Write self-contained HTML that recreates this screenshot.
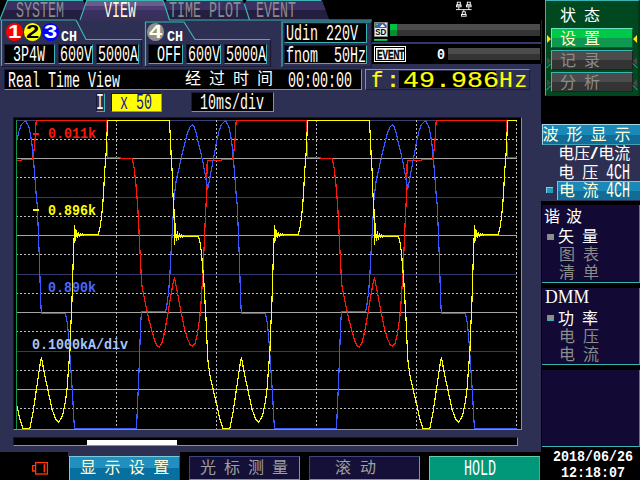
<!DOCTYPE html>
<html><head><meta charset="utf-8"><title>Real Time View</title>
<style>
html,body{margin:0;padding:0;background:#000;}
#s{position:relative;width:640px;height:480px;overflow:hidden;background:#000;font-family:"Liberation Mono","Noto Sans CJK SC",monospace;}
#s>div,#s>span,#s>svg{position:absolute;box-sizing:border-box;}
.m{font-family:"Liberation Mono",monospace;font-size:20px;line-height:20px;white-space:pre;transform:scale(.667,1.07);transform-origin:0 0;color:#fff;}
.b{font-family:"Liberation Mono",monospace;font-weight:bold;font-size:14px;line-height:15px;white-space:pre;transform:scaleX(.952);transform-origin:0 0;color:#fff;}
.c{font-family:"Liberation Sans","Noto Sans CJK SC",sans-serif;font-size:16px;line-height:16px;white-space:pre;color:#fff;}
.bk{background:#000;border-right:1px solid #3cb4b4;border-bottom:1px solid #3cb4b4;border-left:1px solid #181a34;border-top:1px solid #181a34;}
.hl{left:16px;width:501px;height:1px;}
.dh{background:repeating-linear-gradient(90deg,#c0c0c0 0,#c0c0c0 2px,transparent 2px,transparent 4px);}
.vl{top:120px;height:309px;width:1px;background:repeating-linear-gradient(180deg,#c0c0c0 0,#c0c0c0 2px,transparent 2px,transparent 4px);}
</style></head><body><div id="s">

<div style="left:0;top:20px;width:541px;height:432px;background:#2d3052"></div>
<div style="left:372px;top:0;width:169px;height:64px;background:#000"></div>
<div style="left:372px;top:42px;width:169px;height:2px;background:#34386c"></div>
<div style="left:541px;top:20px;width:1px;height:44px;background:#083030"></div>
<svg style="left:0;top:0" width="372" height="21" viewBox="0 0 372 21">
<defs>
<linearGradient id="gi" x1="0" y1="0" x2="0" y2="1"><stop offset="0" stop-color="#3a3062"/><stop offset=".5" stop-color="#3a3062"/><stop offset=".5" stop-color="#241f40"/><stop offset="1" stop-color="#241f40"/></linearGradient>
<linearGradient id="ga" x1="0" y1="0" x2="0" y2="1"><stop offset="0" stop-color="#6c5c8c"/><stop offset=".27" stop-color="#6c5c8c"/><stop offset=".27" stop-color="#4c3c70"/><stop offset=".5" stop-color="#4c3c70"/><stop offset=".5" stop-color="#3a3062"/><stop offset="1" stop-color="#363058"/></linearGradient>
</defs>
<polygon points="7.5,0 83,0 85,4 80,20.5 0,20.5" fill="url(#gi)"/>
<polygon points="86.5,0 163,0 169.5,20.5 80,20.5" fill="url(#ga)"/>
<polygon points="166.5,0 242.5,0 244.3,4 249.5,20.5 169.5,20.5 164.3,4" fill="url(#gi)"/>
<polygon points="246.5,0 322,0 329.5,20.5 249.5,20.5 244.3,4" fill="url(#gi)"/>
<g stroke="#3cb4b4" stroke-width="1.2" fill="none">
<polyline points="0,19.5 7.5,0.5 83,0.5"/>
<polyline points="80,20 86.8,0.5 163,0.5"/>
<polyline points="166.5,0.5 242.5,0.5"/><polyline points="246.5,0.5 321,0.5"/>
<line x1="163.2" y1="0.5" x2="169.5" y2="20"/><line x1="244.3" y1="3.5" x2="249.5" y2="20"/>
<line x1="0" y1="20" x2="76" y2="20"/>
<line x1="169" y1="20" x2="372" y2="20"/>
</g>
</svg>
<span class="m" style="left:16px;top:0.8px;color:#8c8c8c">SYSTEM</span>
<span class="m" style="left:104px;top:0.8px;color:#fffadc">VIEW</span>
<span class="m" style="left:169px;top:0.8px;color:#8c8c8c">TIME PLOT</span>
<span class="m" style="left:256px;top:0.8px;color:#8c8c8c">EVENT</span>
<svg style="left:0;top:19px" width="372" height="50" viewBox="0 19 372 50">
<g stroke="#3cb4b4" stroke-width="1.2" fill="none">
<polyline points="1.5,66 1.5,20.5"/>
<polyline points="76,20 86,39.5 142,39.5"/>
<polyline points="145.5,66 145.5,22 184,22 195,39.5 270,39.5"/>
<polyline points="282,67 282,22 371,22"/>
</g>
<g stroke="#181a34" stroke-width="1.2" fill="none">
<polyline points="1,66.5 141.5,66.5 141.5,40"/>
<polyline points="145,66.5 270.5,66.5 270.5,40"/>
<polyline points="282,67 371.5,67 371.5,22"/>
</g>
</svg>
<div style="left:6.0px;top:23.3px;width:17px;height:17.4px;border-radius:50%;background:#ff0000"></div>
<span style="left:6.0px;top:22.6px;width:17px;text-align:center;font:bold 18px/19px 'Liberation Sans',sans-serif;color:#fff;transform:scaleX(1.32)">1</span>
<div style="left:24.0px;top:23.3px;width:17px;height:17.4px;border-radius:50%;background:#ffff00"></div>
<span style="left:24.0px;top:22.6px;width:17px;text-align:center;font:bold 18px/19px 'Liberation Sans',sans-serif;color:#000;transform:scaleX(1.32)">2</span>
<div style="left:42.0px;top:23.3px;width:17px;height:17.4px;border-radius:50%;background:#0000ff"></div>
<span style="left:42.0px;top:22.6px;width:17px;text-align:center;font:bold 18px/19px 'Liberation Sans',sans-serif;color:#fff;transform:scaleX(1.32)">3</span>
<div style="left:147.0px;top:23.3px;width:17px;height:17.4px;border-radius:50%;background:#909090"></div>
<span style="left:147.0px;top:22.6px;width:17px;text-align:center;font:bold 18px/19px 'Liberation Sans',sans-serif;color:#ffffe0;transform:scaleX(1.32)">4</span>
<span class="b" style="left:60.5px;top:30px;">CH</span>
<span class="b" style="left:166.5px;top:30px;">CH</span>
<div class="bk" style="left:4px;top:44px;width:51px;height:20px"></div>
<span class="m" style="left:12.6px;top:45px;color:#fff">3P4W</span>
<div class="bk" style="left:58px;top:44px;width:35px;height:20px"></div>
<span class="m" style="left:60px;top:45px;color:#fff">600V</span>
<div class="bk" style="left:96px;top:44px;width:43px;height:20px"></div>
<span class="m" style="left:98px;top:45px;color:#fff">5000A</span>
<div class="bk" style="left:148px;top:44px;width:35px;height:20px"></div>
<span class="m" style="left:157px;top:45px;color:#fff">OFF</span>
<div class="bk" style="left:186px;top:44px;width:35px;height:20px"></div>
<span class="m" style="left:188px;top:45px;color:#fff">600V</span>
<div class="bk" style="left:224px;top:44px;width:43px;height:20px"></div>
<span class="m" style="left:226px;top:45px;color:#fff">5000A</span>
<div class="bk" style="left:284px;top:23px;width:83px;height:19.5px"></div>
<span class="m" style="left:286px;top:24px;color:#fff">Udin 220V</span>
<div class="bk" style="left:284px;top:44.5px;width:83px;height:19.5px"></div>
<span class="m" style="left:286px;top:45.5px;color:#fff">fnom  50Hz</span>
<div class="bk" style="left:4px;top:69px;width:358px;height:21px"></div>
<span class="m" style="left:8px;top:70.8px">Real Time View</span>
<span class="c" style="left:185px;top:71px;letter-spacing:8px">经过时间</span>
<span class="m" style="left:287.5px;top:70.8px">00:00:00</span>
<div style="left:365px;top:69px;width:165px;height:21px;border-left:1px solid #3cb4b4;border-top:1px solid #3cb4b4;border-bottom:1px solid #10282c;border-right:1px solid #10282c;background:#2d3052"></div>
<div style="left:399px;top:71px;width:97px;height:17px;background:#000"></div>
<span style="left:370.5px;top:69px;font:21px/24px 'Liberation Mono',monospace;color:#ffff00;white-space:pre;-webkit-text-stroke:.15px #ffff00;transform-origin:0 0;transform:scale(.98,1.05)">f</span>
<span style="left:385px;top:69px;font:21px/24px 'Liberation Mono',monospace;color:#ffff00;white-space:pre;-webkit-text-stroke:.15px #ffff00;transform-origin:0 0;transform:scale(1.27,1.05)">:</span>
<span style="left:403px;top:69px;font:21px/24px 'Liberation Mono',monospace;color:#ffff00;white-space:pre;-webkit-text-stroke:.15px #ffff00;transform-origin:0 0;transform:scale(1.27,1.05)">49.986</span>
<span style="left:499.3px;top:69px;font:21px/24px 'Liberation Mono',monospace;color:#ffff00;white-space:pre;-webkit-text-stroke:.15px #ffff00;transform-origin:0 0;transform:scale(1.1,1.05)">H</span>
<span style="left:514.6px;top:69px;font:21px/24px 'Liberation Mono',monospace;color:#ffff00;white-space:pre;-webkit-text-stroke:.15px #ffff00;transform-origin:0 0;transform:scale(1.0,1.05)">z</span>
<svg style="left:374px;top:22px" width="14" height="20" viewBox="0 0 14 20">
<rect x="0" y="0" width="13.5" height="15" fill="#f4f4f4"/>
<path d="M0.8,0.8 H10 L12.7,3.2 V6 H0.8 Z" fill="#4060a8"/>
<polygon points="6,5 8.5,2 11,5" fill="#fff"/><rect x="1.6" y="1.6" width="2.4" height="1.3" fill="#40e060"/>
<rect x="0.4" y="0.4" width="12.8" height="14.2" fill="none" stroke="#707070" stroke-width=".8"/>
<text x="1.2" y="13.3" font-family="Liberation Sans,sans-serif" font-weight="bold" font-size="8.5" fill="#000" textLength="11" lengthAdjust="spacingAndGlyphs">SD</text>
<rect x="0" y="17" width="13.5" height="1.8" fill="#00e050"/>
</svg>
<div style="left:390px;top:24px;width:150px;height:12px;background:linear-gradient(#4c4c4c 0,#4c4c4c 50%,#343434 50%,#343434 100%)"></div>
<div style="left:390px;top:24px;width:7px;height:12px;background:linear-gradient(#00c040 0,#00c040 50%,#009030 50%,#009030 100%)"></div>
<div style="left:374px;top:46px;width:32px;height:16px;background:#fff;border:1px solid #fff;outline:0"></div>
<div style="left:375px;top:47px;width:30px;height:14px;border:1px solid #000"></div>
<span style="left:377px;top:46.5px;font:bold 13px/15px 'Liberation Sans',sans-serif;color:#000;-webkit-text-stroke:.5px #000;transform:scaleX(.63);transform-origin:0 0;white-space:pre">EVENT</span>
<span class="b" style="left:436.5px;top:48px">0</span>
<div style="left:448px;top:48px;width:92px;height:12px;background:linear-gradient(#4c4c4c 0,#4c4c4c 50%,#343434 50%,#343434 100%)"></div>
<svg style="left:455px;top:1px" width="18" height="17" viewBox="0 0 18 17"><g fill="none" stroke="#fff" stroke-width=".9">
<rect x="2.3" y="1.2" width="3" height="2.8"/><rect x="1.5" y="4" width="4.6" height="1.8"/>
<rect x="12.3" y="1.2" width="3" height="2.8"/><rect x="11.5" y="4" width="4.6" height="1.8"/>
<path d="M3.8,5.8 V8.6 M13.8,5.8 V8.6 M1,8.6 H16.6 M8.8,8.6 V11"/>
<rect x="7.3" y="10.8" width="3" height="2.6"/><rect x="6.5" y="13.4" width="4.6" height="1.8"/>
</g></svg>
<div style="left:95.5px;top:92.5px;width:9.5px;height:19px;background:#2d3052;border-right:1px solid #3cb4b4;border-bottom:1px solid #3cb4b4;border-left:1px solid #181a34;border-top:1px solid #181a34"></div>
<span class="m" style="left:96px;top:92.5px">I</span>
<div style="left:111px;top:93px;width:51px;height:18.5px;background:#ffff00;border-right:1px solid #3cb4b4;border-bottom:1px solid #3cb4b4;border-left:1px solid #181a34;border-top:1px solid #181a34"></div>
<span class="m" style="left:119.5px;top:92.5px;color:#1818a0">x 50</span>
<div class="bk" style="left:190.5px;top:92px;width:83px;height:19.5px"></div>
<span class="m" style="left:200px;top:92.5px">10ms/div</span>
<div style="left:13px;top:117px;width:509px;height:313px;background:#000;border-right:1px solid #3cb4b4;border-bottom:1px solid #3cb4b4;border-left:1px solid #0c1c20;border-top:1px solid #0c1c20"></div>
<div class="hl" style="top:120px;background:#3c4070"></div>
<div class="hl dh" style="top:139px"></div>
<div class="hl" style="top:158px;background:#a4a4a4"></div>
<div class="hl dh" style="top:177px"></div>
<div class="hl" style="top:197px;background:#34386c"></div>
<div class="hl dh" style="top:216px"></div>
<div class="hl" style="top:235px;background:#a4a4a4"></div>
<div class="hl dh" style="top:254px"></div>
<div class="hl" style="top:274px;background:#34386c"></div>
<div class="hl dh" style="top:293px"></div>
<div class="hl" style="top:312px;background:#a4a4a4"></div>
<div class="hl dh" style="top:331px"></div>
<div class="hl" style="top:351px;background:#34386c"></div>
<div class="hl dh" style="top:370px"></div>
<div class="hl" style="top:389px;background:#a4a4a4"></div>
<div class="hl dh" style="top:408px"></div>
<div class="vl" style="left:116px"></div>
<div class="vl" style="left:216px"></div>
<div class="vl" style="left:316px"></div>
<div class="vl" style="left:416px"></div>
<div class="vl" style="left:516px"></div>
<div style="left:16px;top:120px;width:1px;height:309px;background:#109848"></div>
<svg style="left:0;top:0" width="640" height="480" viewBox="0 0 640 480"><defs><clipPath id="cp"><rect x="16.5" y="119.5" width="500.3" height="310"/></clipPath></defs><g clip-path="url(#cp)" fill="none" stroke-width="1.2" stroke-linejoin="round" shape-rendering="crispEdges">
<polyline stroke="#ff1808" points="17.0,160.5 21.0,160.5 21.5,159.5 32.5,159.5 33.4,155.0 34.8,143.0 36.2,120.5 106.5,120.5 107.2,157.5 120.0,157.5 120.5,158.5 132.2,158.5 134.0,167.5 135.6,180.6 136.9,195.6 137.8,208.0 138.4,218.8 139.3,237.5 140.2,256.2 141.2,275.0 142.1,287.0 143.4,293.8 146.2,307.0 149.0,320.0 151.9,331.2 154.7,340.6 157.5,346.2 159.4,347.2 162.2,342.5 165.0,329.4 167.8,314.4 170.2,299.4 172.5,286.2 174.4,277.8 176.2,286.2 179.0,301.2 181.9,316.2 184.7,329.4 187.5,338.8 190.3,344.8 192.8,346.2 195.0,343.4 197.2,335.0 199.7,318.0 201.0,303.0 202.1,286.2 202.9,275.0 203.4,262.0 204.4,241.0 205.3,218.8 206.3,200.0 206.8,180.0 207.2,160.5 217.0,160.5 217.0,160.5 221.0,160.5 221.5,159.5 232.5,159.5 233.4,155.0 234.8,143.0 236.2,120.5 306.5,120.5 307.2,157.5 320.0,157.5 320.5,158.5 332.2,158.5 334.0,167.5 335.6,180.6 336.9,195.6 337.8,208.0 338.4,218.8 339.3,237.5 340.2,256.2 341.2,275.0 342.1,287.0 343.4,293.8 346.2,307.0 349.0,320.0 351.9,331.2 354.7,340.6 357.5,346.2 359.4,347.2 362.2,342.5 365.0,329.4 367.8,314.4 370.2,299.4 372.5,286.2 374.4,277.8 376.2,286.2 379.0,301.2 381.9,316.2 384.7,329.4 387.5,338.8 390.3,344.8 392.8,346.2 395.0,343.4 397.2,335.0 399.7,318.0 401.0,303.0 402.1,286.2 402.9,275.0 403.4,262.0 404.4,241.0 405.3,218.8 406.3,200.0 406.8,180.0 407.2,160.5 417.0,160.5 417.0,160.5 421.0,160.5 421.5,159.5 432.5,159.5 433.4,155.0 434.8,143.0 436.2,120.5 506.5,120.5 507.2,157.5 520.0,157.5 520.5,158.5 532.2,158.5 534.0,167.5 535.6,180.6 536.9,195.6 537.8,208.0 538.4,218.8 539.3,237.5 540.2,256.2 541.2,275.0 542.1,287.0 543.4,293.8 546.2,307.0 549.0,320.0 551.9,331.2 554.7,340.6 557.5,346.2 559.4,347.2 562.2,342.5 565.0,329.4 567.8,314.4 570.2,299.4 572.5,286.2 574.4,277.8 576.2,286.2 579.0,301.2 581.9,316.2 584.7,329.4 587.5,338.8 590.3,344.8 592.8,346.2 595.0,343.4 597.2,335.0 599.7,318.0 601.0,303.0 602.1,286.2 602.9,275.0 603.4,262.0 604.4,241.0 605.3,218.8 606.3,200.0 606.8,180.0 607.2,160.5 617.0,160.5"/>
<polyline stroke="#3858ff" points="17.0,139.4 19.0,131.0 21.5,124.5 25.4,120.5 28.8,126.2 31.6,141.2 32.9,152.5 33.4,160.0 34.8,175.0 36.2,195.6 37.2,205.0 38.1,226.0 39.0,248.8 39.8,273.0 40.5,295.0 41.3,313.5 65.3,313.5 67.2,322.0 68.5,335.0 69.6,350.0 70.4,363.0 71.5,378.0 72.8,398.8 73.8,419.4 74.7,428.5 136.5,428.5 136.9,419.4 137.8,398.8 138.8,376.2 139.7,352.0 140.6,323.8 141.6,311.5 165.6,311.5 166.9,305.0 168.4,293.8 169.7,278.8 170.6,260.0 171.6,243.0 172.5,228.0 173.4,211.0 174.0,198.0 176.2,180.6 180.0,163.8 183.8,147.0 187.5,132.8 190.0,127.0 192.2,124.8 194.2,127.0 196.0,132.0 198.8,145.0 202.5,160.0 205.3,175.0 207.8,189.0 210.0,177.0 212.8,162.0 215.6,147.0 217.0,139.4 217.0,139.4 219.0,131.0 221.5,124.5 225.4,120.5 228.8,126.2 231.6,141.2 232.9,152.5 233.4,160.0 234.8,175.0 236.2,195.6 237.2,205.0 238.1,226.0 239.0,248.8 239.8,273.0 240.5,295.0 241.3,313.5 265.3,313.5 267.2,322.0 268.5,335.0 269.6,350.0 270.4,363.0 271.5,378.0 272.8,398.8 273.8,419.4 274.7,428.5 336.5,428.5 336.9,419.4 337.8,398.8 338.8,376.2 339.7,352.0 340.6,323.8 341.6,311.5 365.6,311.5 366.9,305.0 368.4,293.8 369.7,278.8 370.6,260.0 371.6,243.0 372.5,228.0 373.4,211.0 374.0,198.0 376.2,180.6 380.0,163.8 383.8,147.0 387.5,132.8 390.0,127.0 392.2,124.8 394.2,127.0 396.0,132.0 398.8,145.0 402.5,160.0 405.3,175.0 407.8,189.0 410.0,177.0 412.8,162.0 415.6,147.0 417.0,139.4 417.0,139.4 419.0,131.0 421.5,124.5 425.4,120.5 428.8,126.2 431.6,141.2 432.9,152.5 433.4,160.0 434.8,175.0 436.2,195.6 437.2,205.0 438.1,226.0 439.0,248.8 439.8,273.0 440.5,295.0 441.3,313.5 465.3,313.5 467.2,322.0 468.5,335.0 469.6,350.0 470.4,363.0 471.5,378.0 472.8,398.8 473.8,419.4 474.7,428.5 536.5,428.5 536.9,419.4 537.8,398.8 538.8,376.2 539.7,352.0 540.6,323.8 541.6,311.5 565.6,311.5 566.9,305.0 568.4,293.8 569.7,278.8 570.6,260.0 571.6,243.0 572.5,228.0 573.4,211.0 574.0,198.0 576.2,180.6 580.0,163.8 583.8,147.0 587.5,132.8 590.0,127.0 592.2,124.8 594.2,127.0 596.0,132.0 598.8,145.0 602.5,160.0 605.3,175.0 607.8,189.0 610.0,177.0 612.8,162.0 615.6,147.0 617.0,139.4"/>
<polyline stroke="#ffff00" points="17.1,406.0 19.5,418.0 23.1,428.5 29.7,428.5 32.5,415.6 35.3,397.0 38.1,378.0 40.0,365.0 41.5,357.5 43.8,370.6 46.6,383.8 49.4,397.0 52.2,410.0 55.9,419.4 58.8,422.2 62.5,415.6 65.3,402.5 67.2,387.5 68.5,368.8 70.0,350.0 70.9,324.0 71.9,303.0 72.6,280.0 73.4,255.0 74.2,236.0 74.7,226.0 75.6,240.0 76.6,231.0 77.6,237.7 78.6,232.4 79.6,236.5 80.6,233.4 81.6,235.7 82.6,234.0 83.6,235.2 85.0,234.5 98.0,234.5 100.0,228.0 101.5,217.0 102.8,204.0 103.8,188.0 104.7,171.0 106.0,155.0 107.0,134.0 107.9,120.5 169.1,120.5 170.2,133.8 171.0,152.5 172.1,171.2 173.0,195.6 174.0,210.0 174.5,244.0 175.3,224.0 176.3,240.5 177.3,232.0 178.3,239.0 179.3,233.6 180.3,237.8 181.3,234.8 182.3,237.0 183.3,235.4 184.3,236.5 186.0,236.5 198.4,236.5 200.2,243.0 201.6,254.4 202.5,265.6 203.8,280.6 204.4,292.0 205.9,316.2 206.8,336.9 207.8,359.4 208.5,365.0 210.4,378.0 212.8,387.5 215.6,400.6 217.1,406.0 217.1,406.0 219.5,418.0 223.1,428.5 229.7,428.5 232.5,415.6 235.3,397.0 238.1,378.0 240.0,365.0 241.5,357.5 243.8,370.6 246.6,383.8 249.4,397.0 252.2,410.0 255.9,419.4 258.8,422.2 262.5,415.6 265.3,402.5 267.2,387.5 268.5,368.8 270.0,350.0 270.9,324.0 271.9,303.0 272.6,280.0 273.4,255.0 274.2,236.0 274.7,226.0 275.6,240.0 276.6,231.0 277.6,237.7 278.6,232.4 279.6,236.5 280.6,233.4 281.6,235.7 282.6,234.0 283.6,235.2 285.0,234.5 298.0,234.5 300.0,228.0 301.5,217.0 302.8,204.0 303.8,188.0 304.7,171.0 306.0,155.0 307.0,134.0 307.9,120.5 369.1,120.5 370.2,133.8 371.0,152.5 372.1,171.2 373.0,195.6 374.0,210.0 374.5,244.0 375.3,224.0 376.3,240.5 377.3,232.0 378.3,239.0 379.3,233.6 380.3,237.8 381.3,234.8 382.3,237.0 383.3,235.4 384.3,236.5 386.0,236.5 398.4,236.5 400.2,243.0 401.6,254.4 402.5,265.6 403.8,280.6 404.4,292.0 405.9,316.2 406.8,336.9 407.8,359.4 408.5,365.0 410.4,378.0 412.8,387.5 415.6,400.6 417.1,406.0 417.1,406.0 419.5,418.0 423.1,428.5 429.7,428.5 432.5,415.6 435.3,397.0 438.1,378.0 440.0,365.0 441.5,357.5 443.8,370.6 446.6,383.8 449.4,397.0 452.2,410.0 455.9,419.4 458.8,422.2 462.5,415.6 465.3,402.5 467.2,387.5 468.5,368.8 470.0,350.0 470.9,324.0 471.9,303.0 472.6,280.0 473.4,255.0 474.2,236.0 474.7,226.0 475.6,240.0 476.6,231.0 477.6,237.7 478.6,232.4 479.6,236.5 480.6,233.4 481.6,235.7 482.6,234.0 483.6,235.2 485.0,234.5 498.0,234.5 500.0,228.0 501.5,217.0 502.8,204.0 503.8,188.0 504.7,171.0 506.0,155.0 507.0,134.0 507.9,120.5 569.1,120.5 570.2,133.8 571.0,152.5 572.1,171.2 573.0,195.6 574.0,210.0 574.5,244.0 575.3,224.0 576.3,240.5 577.3,232.0 578.3,239.0 579.3,233.6 580.3,237.8 581.3,234.8 582.3,237.0 583.3,235.4 584.3,236.5 586.0,236.5 598.4,236.5 600.2,243.0 601.6,254.4 602.5,265.6 603.8,280.6 604.4,292.0 605.9,316.2 606.8,336.9 607.8,359.4 608.5,365.0 610.4,378.0 612.8,387.5 615.6,400.6 617.1,406.0"/>
</g></svg>
<div style="left:33px;top:132.5px;width:6px;height:2px;background:#ff1808"></div>
<span class="b" style="left:48px;top:127.3px;color:#ff1808">0.011k</span>
<div style="left:33px;top:209px;width:6px;height:2px;background:#ffff00"></div>
<span class="b" style="left:48px;top:204.4px;color:#ffff00">0.896k</span>
<span class="b" style="left:48px;top:281.4px;color:#4868ff">0.890k</span>
<span class="b" style="left:32px;top:338.3px;color:#a8c4ff">0.1000kA/div</span>
<div style="left:13px;top:437px;width:505px;height:9px;background:#000;border-right:1px solid #3cb4b4;border-bottom:1px solid #3cb4b4;border-left:1px solid #0c1c20;border-top:1px solid #0c1c20"></div>
<div style="left:87px;top:440px;width:90px;height:5px;background:#fff"></div>
<div style="left:68px;top:452px;width:112px;height:5px;background:#2d3052"></div>
<svg style="left:31px;top:461px" width="18" height="15" viewBox="0 0 18 15"><g fill="none" stroke="#ff3c00" stroke-width="1.3">
<rect x="4.6" y="1.6" width="11.8" height="11.4"/><path d="M4.6,4.6 H1.7 V10 H4.6"/></g><rect x="12.6" y="3.2" width="1.7" height="8.2" fill="#ff3c00"/></svg>
<div style="left:69px;top:456px;width:111px;height:24px;background:linear-gradient(#2090c0 0,#2090c0 50%,#0870a0 50%,#0870a0 100%);border-left:1px solid #78cce0;border-top:1px solid #78cce0;border-right:1px solid #085878"></div>
<span class="c" style="left:80px;top:460px;letter-spacing:8.4px;color:#ffffdc">显示设置</span>
<div style="left:189px;top:456px;width:111px;height:24px;background:#141038;border-left:1px solid #40447c;border-top:1px solid #40447c;border-right:1px solid #3cb4b4;border-bottom:1px solid #3cb4b4"></div>
<div style="left:309px;top:456px;width:111px;height:24px;background:#141038;border-left:1px solid #40447c;border-top:1px solid #40447c;border-right:1px solid #3cb4b4;border-bottom:1px solid #3cb4b4"></div>
<span class="c" style="left:200px;top:460px;letter-spacing:8px;color:#a0a0a0">光标测量</span>
<span class="c" style="left:335px;top:460px;letter-spacing:9px;color:#a0a0a0">滚动</span>
<div style="left:429px;top:456px;width:111px;height:24px;background:#009878;border-left:1px solid #60d0b0;border-top:1px solid #60d0b0;border-right:1px solid #40b090"></div>
<span class="m" style="left:463.5px;top:458.8px">HOLD</span>
<span class="b" style="left:552.5px;top:450px">2018/06/26</span>
<span class="b" style="left:560.5px;top:466px">12:18:07</span>
<div style="left:545px;top:0;width:95px;height:96px;background:#004820;border-left:1px solid #3cb4b4;border-top:1px solid #3cb4b4;border-bottom:1px solid #004422;border-right:2px solid #003818"></div>
<span class="c" style="left:560px;top:8px;letter-spacing:8px">状态</span>
<div style="left:551px;top:28px;width:82px;height:20px;background:linear-gradient(#00c848 0,#00c848 50%,#109850 50%,#109850 100%);border-left:1px solid #70e0c0;border-top:1px solid #70e0c0;border-right:1px solid #086030;border-bottom:1px solid #086030"></div>
<span class="c" style="left:560px;top:30.5px;letter-spacing:8px;color:#ffffc8">设置</span>
<div style="left:551px;top:50px;width:82px;height:20px;background:linear-gradient(#4c4c4c 0,#4c4c4c 50%,#343434 50%,#343434 100%);border-left:1px solid #3cb4b4;border-top:1px solid #3cb4b4;border-right:1px solid #202020;border-bottom:1px solid #202020"></div>
<span class="c" style="left:560px;top:52.5px;letter-spacing:8px;color:#8c8c8c">记录</span>
<div style="left:551px;top:72px;width:82px;height:20px;background:linear-gradient(#4c4c4c 0,#4c4c4c 50%,#343434 50%,#343434 100%);border-left:1px solid #3cb4b4;border-top:1px solid #3cb4b4;border-right:1px solid #202020;border-bottom:1px solid #202020"></div>
<span class="c" style="left:560px;top:74.5px;letter-spacing:8px;color:#8c8c8c">分析</span>
<svg style="left:546px;top:28px" width="94" height="66" viewBox="0 0 94 66">
<polygon points="1,7 5,11 1,15" fill="#ffe800"/><polygon points="91,7 87,11 91,15" fill="#ffe800"/>
<polygon points="1,29 5,33 1,37" fill="#484848"/><polygon points="91,29 87,33 91,37" fill="#484848"/>
<polygon points="1,51 5,55 1,59" fill="#484848"/><polygon points="91,51 87,55 91,59" fill="#484848"/>
<g stroke="#3cb4b4" stroke-width="1" fill="none"><path d="M0.5,40 L5,35.5 M0.5,62 L5,57.5 M87,35.5 L91.5,40 M87,57.5 L91.5,62"/></g>
</svg>
<div style="left:541px;top:124px;width:99px;height:77px;background:#2d3052"></div>
<div style="left:542px;top:124px;width:98px;height:21px;background:linear-gradient(#1c88b8 0,#1c88b8 50%,#106c98 50%,#106c98 100%);border-left:1px solid #a0d8e8;border-top:1px solid #a0d8e8;border-bottom:1px solid #48a0b8"></div>
<span class="c" style="left:542.5px;top:126.5px;letter-spacing:8px;color:#ffffdc">波形显示</span>
<span class="c" style="left:558.3px;top:146px">电压<span style="display:inline-block;width:8px;text-align:center;transform:scaleX(1.7)">/</span>电流</span>
<span class="c" style="left:558.3px;top:164.5px;letter-spacing:8px">电压</span>
<span class="m" style="left:606px;top:162.5px">4CH</span>
<div style="left:557px;top:181px;width:83px;height:19px;background:linear-gradient(#1c88b8 0,#1c88b8 50%,#106c98 50%,#106c98 100%);border-left:1px solid #78c4e0;border-top:1px solid #78c4e0"></div>
<span class="c" style="left:559px;top:182.5px;letter-spacing:7.5px;color:#ffffdc">电流</span>
<span class="m" style="left:606px;top:180.5px;color:#ffffdc">4CH</span>
<div style="left:546px;top:187px;width:7px;height:6px;background:#2898b8;border-left:1px solid #80d0e0;border-top:1px solid #80d0e0"></div>
<div style="left:542px;top:205px;width:98px;height:78px;background:#120a34;border-bottom:1px solid #3cb4b4;border-right:1px solid #2c8c94"></div>
<div style="left:542px;top:288px;width:98px;height:77px;background:#120a34;border-bottom:1px solid #3cb4b4;border-right:1px solid #2c8c94"></div>
<div style="left:542px;top:370px;width:98px;height:77px;background:#120a34;border-bottom:1px solid #3cb4b4;border-right:1px solid #2c8c94"></div>
<span class="c" style="left:544px;top:208.5px;letter-spacing:6px">谐波</span>
<span class="c" style="left:558px;top:228.5px;letter-spacing:8px">矢量</span>
<span class="c" style="left:559px;top:246.5px;letter-spacing:8px;color:#8c8c8c">图表</span>
<span class="c" style="left:559px;top:264.5px;letter-spacing:8px;color:#8c8c8c">清单</span>
<span style="left:545px;top:286px;font:19px/22px 'Liberation Serif',serif;color:#fff;transform:scaleX(.93);transform-origin:0 0">DMM</span>
<span class="c" style="left:558px;top:310.5px;letter-spacing:8px">功率</span>
<span class="c" style="left:559px;top:328.5px;letter-spacing:8px;color:#8c8c8c">电压</span>
<span class="c" style="left:559px;top:346.5px;letter-spacing:8px;color:#8c8c8c">电流</span>
<div style="left:546.5px;top:233.5px;width:7px;height:6px;background:#8c8c8c;border-left:1px solid #38a8b8;border-bottom:1px solid #38a8b8"></div>
<div style="left:546.5px;top:314.5px;width:7px;height:6px;background:#8c8c8c;border-left:1px solid #38a8b8;border-bottom:1px solid #38a8b8"></div>
</div></body></html>
